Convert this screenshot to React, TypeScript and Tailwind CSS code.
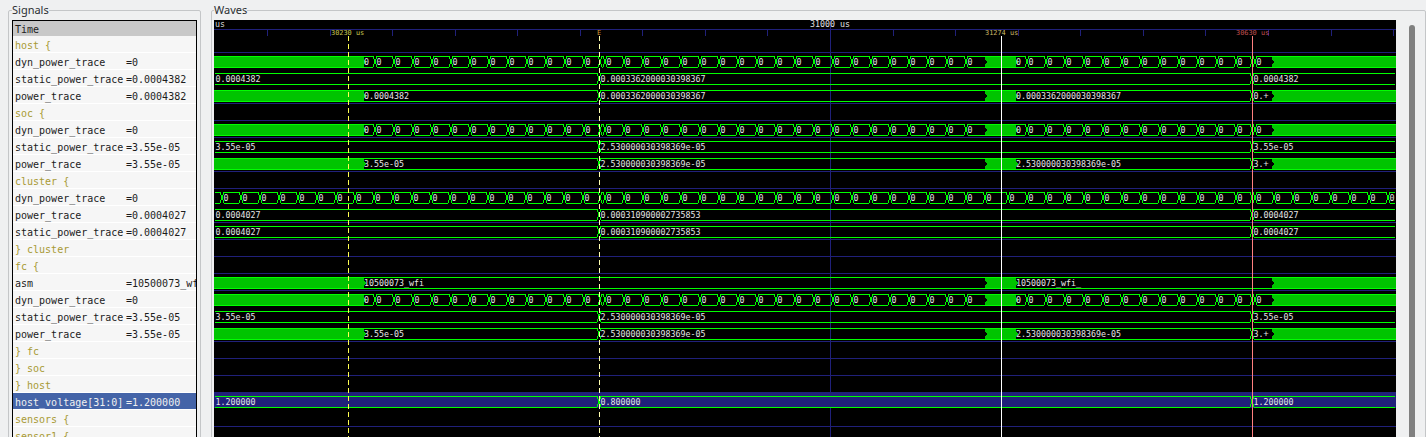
type Seg = { from: number; to: number; fill?: boolean; label?: string };

const ROW_TOP = 36;
const ROW_H = 17;
const CANVAS_X = 214;
const CANVAS_Y = 20;
const CANVAS_W = 1182;
const CANVAS_H = 417;
const BLUE = '#20207a';
const LINE = '#00ff00';
const FILL = '#00c400';

// signal list, in the order they sit in the panel
const signals: { name: string; value?: string }[] = [
  { name: 'host {' },
  { name: 'dyn_power_trace', value: '=0' },
  { name: 'static_power_trace', value: '=0.0004382' },
  { name: 'power_trace', value: '=0.0004382' },
  { name: 'soc {' },
  { name: 'dyn_power_trace', value: '=0' },
  { name: 'static_power_trace', value: '=3.55e-05' },
  { name: 'power_trace', value: '=3.55e-05' },
  { name: 'cluster {' },
  { name: 'dyn_power_trace', value: '=0' },
  { name: 'power_trace', value: '=0.0004027' },
  { name: 'static_power_trace', value: '=0.0004027' },
  { name: '} cluster' },
  { name: 'fc {' },
  { name: 'asm', value: '=10500073_wfi_' },
  { name: 'dyn_power_trace', value: '=0' },
  { name: 'static_power_trace', value: '=3.55e-05' },
  { name: 'power_trace', value: '=3.55e-05' },
  { name: '} fc' },
  { name: '} soc' },
  { name: '} host' },
  { name: 'host_voltage[31:0]', value: '=1.200000' },
  { name: 'sensors {' },
  { name: 'sensor1 {' },
];

const SELECTED = 21;
const NO_GRID = [1, 2, 6, 9, 15, 16, 21];

const range = (start: number, step: number, end: number) => {
  const out: number[] = [];
  for (let x = start; x <= end; x += step) out.push(x);
  return out;
};

// slivers too narrow for a value stay unlabelled
const zeros = (edges: number[]): Seg[] =>
  edges.slice(0, -1).map((x, i) => ({
    from: x,
    to: edges[i + 1],
    label: edges[i + 1] - x > 5 ? '0' : undefined,
  }));

const dynRow: Seg[] = [
  { from: 214, to: 364, fill: true },
  ...zeros([364, ...range(375, 19, 584), 600, ...range(605, 19, 966), 985]),
  { from: 985, to: 1016, fill: true },
  ...zeros([1016, ...range(1027, 19, 1236), 1252, 1255, 1272]),
  { from: 1272, to: 1396, fill: true },
];

const clusterRow: Seg[] = [
  { from: 215, to: 222 },
  ...zeros([
    222,
    ...range(241, 19, 584),
    600,
    ...range(605, 19, 985),
    1008,
    ...range(1027, 19, 1236),
    1252,
    ...range(1255, 19, 1388),
    1395,
  ]),
];

const staticRow = (a: string, b: string): Seg[] => [
  { from: 215, to: 599, label: a },
  { from: 599, to: 1252, label: b },
  { from: 1252, to: 1395, label: a },
];

const powerRow = (a: string, b: string, short: string): Seg[] => [
  { from: 214, to: 364, fill: true },
  { from: 364, to: 599, label: a },
  { from: 599, to: 985, label: b },
  { from: 985, to: 1016, fill: true },
  { from: 1016, to: 1252, label: b },
  { from: 1252, to: 1272, label: short },
  { from: 1272, to: 1396, fill: true },
];

const waves: Record<number, Seg[]> = {
  1: dynRow,
  2: staticRow('0.0004382', '0.0003362000030398367'),
  3: powerRow('0.0004382', '0.0003362000030398367', '0.+'),
  5: dynRow,
  6: staticRow('3.55e-05', '2.530000030398369e-05'),
  7: powerRow('3.55e-05', '2.530000030398369e-05', '3.+'),
  9: clusterRow,
  10: staticRow('0.0004027', '0.000310900002735853'),
  11: staticRow('0.0004027', '0.000310900002735853'),
  14: [
    { from: 214, to: 364, fill: true },
    { from: 364, to: 985, label: '10500073_wfi' },
    { from: 985, to: 1016, fill: true },
    { from: 1016, to: 1272, label: '10500073_wfi_' },
    { from: 1272, to: 1396, fill: true },
  ],
  15: dynRow,
  16: staticRow('3.55e-05', '2.530000030398369e-05'),
  17: powerRow('3.55e-05', '2.530000030398369e-05', '3.+'),
  21: staticRow('1.200000', '0.800000'),
};

const ticks = range(267, 62.56, 1396);

function WaveRow({ row, segs }: { row: number; segs: Seg[] }) {
  const t = ROW_TOP + ROW_H * row;
  const top = t + 3;
  const bot = t + 14;
  const mid = t + 9;
  return (
    <g>
      {segs.map((s, i) => {
        const prev = segs[i - 1];
        const next = segs[i + 1];
        if (s.fill) {
          const right = next ? `${s.to},${mid - 3} ${s.to + 2},${mid} ${s.to},${mid + 3}` : '';
          const left = prev ? `${s.from},${mid + 3} ${s.from + 2},${mid} ${s.from},${mid - 3}` : '';
          return (
            <g key={i}>
              <polygon
                points={`${s.from},${top} ${s.to},${top} ${right} ${s.to},${bot + 1} ${s.from},${bot + 1} ${left}`}
                fill={FILL}
                shapeRendering="crispEdges"
              />
              <rect x={s.from} y={top} width={s.to - s.from} height={1} fill={LINE} />
              <rect x={s.from} y={bot} width={s.to - s.from} height={1} fill={LINE} />
            </g>
          );
        }
        const x0 = prev && !prev.fill ? s.from + 2 : s.from;
        const x1 = next && !next.fill ? s.to - 2 : s.to;
        const textX = prev ? (prev.fill ? s.from : s.from + 1.5) : s.from + 0.5;
        return (
          <g key={i}>
            <rect x={x0} y={top} width={x1 - x0} height={1} fill={LINE} />
            <rect x={x0} y={bot} width={x1 - x0} height={1} fill={LINE} />
            {next && !next.fill && (
              <g stroke={LINE} shapeRendering="crispEdges">
                <line x1={s.to - 2} y1={top} x2={s.to + 2} y2={bot} />
                <line x1={s.to - 2} y1={bot} x2={s.to + 2} y2={top} />
              </g>
            )}
            {s.label && (
              <text x={textX} y={t + 12} fill="#e6e6e6" className="text-[8.3px]">
                {s.label}
              </text>
            )}
          </g>
        );
      })}
    </g>
  );
}

function WaveCanvas() {
  return (
    <svg
      width={CANVAS_W}
      height={CANVAS_H}
      viewBox={`${CANVAS_X} ${CANVAS_Y} ${CANVAS_W} ${CANVAS_H}`}
      className="block bg-black font-['DejaVu_Sans_Mono',monospace]"
    >
      <rect x={CANVAS_X} y={29} width={CANVAS_W} height={1} fill={BLUE} />
      {ticks.map((x) => (
        <rect key={x} x={Math.round(x)} y={30} width={1} height={6} fill={BLUE} />
      ))}
      <rect x={830} y={CANVAS_Y} width={1} height={CANVAS_H} fill={BLUE} />

      {signals.map((_, i) =>
        NO_GRID.includes(i) ? null : (
          <rect key={i} x={CANVAS_X} y={52 + ROW_H * i} width={CANVAS_W} height={1} fill={BLUE} />
        ),
      )}
      <rect x={CANVAS_X} y={392} width={CANVAS_W} height={16} fill={BLUE} />

      {Object.entries(waves).map(([row, segs]) => (
        <WaveRow key={row} row={Number(row)} segs={segs} />
      ))}

      <text x={215} y={27} fill="#d8d8d8" className="text-[8.3px]">us</text>
      <text x={810} y={27} fill="#e0e0e0" className="text-[8.3px]">31000 us</text>
      <text x={331} y={35} fill="#c8c850" className="text-[6.9px]">30230 us</text>
      <text x={597} y={35} fill="#d09030" className="text-[7px]">E</text>
      <text x={985} y={35} fill="#ccbb66" className="text-[6.9px]">31274 us</text>
      <text x={1236} y={35} fill="#c05050" className="text-[6.9px]">30630 us</text>

      <line x1={348.5} y1={36} x2={348.5} y2={437} stroke="#ffff50" strokeDasharray="5 3" />
      <line x1={599.5} y1={36} x2={599.5} y2={437} stroke="#ffffb0" strokeDasharray="5 3" />
      <rect x={1001} y={36} width={1} height={401} fill="#ffffff" />
      <rect x={1252} y={36} width={1} height={401} fill="#ff8080" />
    </svg>
  );
}

function SignalRow({ name, value, selected }: { name: string; value?: string; selected: boolean }) {
  return (
    <div
      className={`flex h-[16px] mb-px pt-[3px] leading-[13px] shrink-0 pl-[2px] whitespace-nowrap overflow-hidden ${
        selected ? 'bg-[#4464a8] text-[#f0f0f0]' : 'bg-[#f6f6f6]'
      } ${value ? '' : 'text-[#a89a34]'}`}
    >
      {value ? (
        <>
          <span className="w-[111px] shrink-0">{name}</span>
          <span>{value}</span>
        </>
      ) : (
        <span>{name}</span>
      )}
    </div>
  );
}

export default function App() {
  return (
    <div className="flex w-[1426px] h-[437px] overflow-hidden bg-[#eff0f1] text-[#2a2e32] font-['Noto_Sans',sans-serif]">
      <fieldset className="ml-[8px] mt-[3px] w-[193px] h-[470px] shrink-0 border border-[#c4c6c8] rounded-[2px] px-[3px]">
        <legend className="text-[11px] leading-[14px]">Signals</legend>
        <div className="mt-[3px] w-[185px] border border-black border-b-0 bg-white text-[10px] text-[#1c1c1c] font-['DejaVu_Sans_Mono',monospace] flex flex-col">
          <div className="flex h-[15px] pt-px shrink-0 items-center pl-[2px] bg-[#c8c8c8]">Time</div>
          {signals.map((s, i) => (
            <SignalRow key={i} name={s.name} value={s.value} selected={i === SELECTED} />
          ))}
        </div>
      </fieldset>
      <fieldset className="ml-[10px] mt-[3px] w-[1215px] h-[470px] shrink-0 border border-[#c4c6c8] rounded-[2px] pl-[2px]">
        <legend className="text-[11px] leading-[14px]">Waves</legend>
        <div className="flex mt-[3px] items-start">
          <WaveCanvas />
          <div className="ml-[13px] mt-[5px] w-[6px] h-[440px] rounded-t-[3px] bg-[#808080]" />
        </div>
      </fieldset>
    </div>
  );
}
